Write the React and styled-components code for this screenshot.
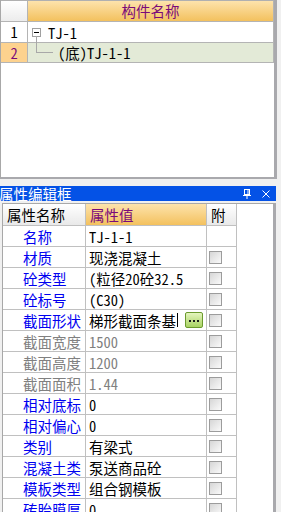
import React from "react";
import styled, { createGlobalStyle } from "styled-components";

const GlobalStyle = createGlobalStyle`
  html, body {
    margin: 0;
    padding: 0;
    background: #f0f0f0;
  }
  body {
    font-family: "Noto Sans Mono CJK SC", "Noto Sans CJK SC", "DejaVu Sans", sans-serif;
    font-size: 14px;
  }
`;

const props = [
  { name: "名称", value: "TJ-1-1", noCheck: true },
  { name: "材质", value: "现浇混凝土" },
  { name: "砼类型", value: "(粒径20砼32.5" },
  { name: "砼标号", value: "(C30)" },
  { name: "截面形状", value: "梯形截面条基", button: true },
  { name: "截面宽度", value: "1500", disabled: true },
  { name: "截面高度", value: "1200", disabled: true },
  { name: "截面面积", value: "1.44", disabled: true },
  { name: "相对底标", value: "0" },
  { name: "相对偏心", value: "0" },
  { name: "类别", value: "有梁式" },
  { name: "混凝土类", value: "泵送商品砼" },
  { name: "模板类型", value: "组合钢模板" },
  { name: "砖胎膜厚", value: "0" },
];

const App = () => (
  <Frame>
    <GlobalStyle />
    <TopPanel>
      <TreeHeader>
        <NumHead />
        <NameHead>构件名称</NameHead>
      </TreeHeader>
      <TreeRow>
        <RowNum>1</RowNum>
        <TreeCell>
          <Expander>
            <svg width="9" height="9" viewBox="0 0 9 9">
              <rect x="0.5" y="0.5" width="8" height="8" fill="#fff" stroke="#a0a0a0" />
              <line x1="2" y1="4.5" x2="7" y2="4.5" stroke="#000" />
            </svg>
          </Expander>
          <NodeText>TJ-1</NodeText>
        </TreeCell>
      </TreeRow>
      <TreeRow $selected>
        <RowNum $selected>2</RowNum>
        <TreeCell $selected>
          <Branch />
          <NodeText $child>(底)TJ-1-1</NodeText>
        </TreeCell>
      </TreeRow>
    </TopPanel>

    <TitleBar>
      <Title>属性编辑框</Title>
      <TitleIcons>
        <svg width="8" height="10" viewBox="0 0 8 10">
          <rect x="1.5" y="0.5" width="5" height="5" fill="none" stroke="#fff" />
          <line x1="5" y1="1" x2="5" y2="5" stroke="#fff" />
          <line x1="0" y1="6.5" x2="8" y2="6.5" stroke="#fff" />
          <line x1="4" y1="7" x2="4" y2="10" stroke="#fff" />
        </svg>
        <svg width="8" height="8" viewBox="0 0 8 8">
          <path d="M0.5 0.5 L7.5 7.5 M7.5 0.5 L0.5 7.5" stroke="#fff" strokeWidth="1" />
        </svg>
      </TitleIcons>
    </TitleBar>

    <PropPanel>
      <PropGrid>
        <HeadCell>属性名称</HeadCell>
        <HeadCell $accent>属性值</HeadCell>
        <HeadCell>附</HeadCell>
        {props.map((p) => (
          <React.Fragment key={p.name}>
            <NameCell $disabled={p.disabled}>{p.name}</NameCell>
            <ValueCell $disabled={p.disabled}>
              <ValueText>{p.value}</ValueText>
              {p.button && (
                <>
                  <Caret />
                  <DotsButton title="...">
                    <svg width="10" height="3" viewBox="0 0 10 3">
                      <rect x="0" y="0" width="2" height="2" fill="#1a1a1a" />
                      <rect x="4" y="0" width="2" height="2" fill="#1a1a1a" />
                      <rect x="8" y="0" width="2" height="2" fill="#1a1a1a" />
                    </svg>
                  </DotsButton>
                </>
              )}
            </ValueCell>
            <CheckCell>{!p.noCheck && <CheckBox />}</CheckCell>
          </React.Fragment>
        ))}
      </PropGrid>
    </PropPanel>
  </Frame>
);

const Frame = styled.div`
  width: 281px;
  height: 512px;
  overflow: hidden;
  display: flex;
  flex-direction: column;
  background: #f0f0f0;
`;

const TopPanel = styled.div`
  width: 273px;
  height: 177px;
  flex: none;
  background: #fff;
  border-left: 1px solid #a8a8a8;
  border-right: 3px solid #a9a9ad;
  border-bottom: 2px solid #a9a9ad;
`;

const TreeHeader = styled.div`
  display: grid;
  grid-template-columns: 27px 1fr;
  height: 22px;
  border-top: 1px solid #b0b0b0;
  border-bottom: 1px solid #b4b4b4;
  box-sizing: border-box;
`;

const NumHead = styled.div`
  background: linear-gradient(#ffffff, #ececec);
  border-right: 1px solid #b4b4b4;
`;

const NameHead = styled.div`
  background: linear-gradient(#fde3ac, #f3c15e);
  color: #7a0a7a;
  text-align: center;
  line-height: 20px;
  font-size: 14.5px;
  border-right: 1px solid #b4b4b4;
`;

const TreeRow = styled.div`
  display: grid;
  grid-template-columns: 27px 1fr;
  height: ${(p) => (p.$selected ? "19px" : "20px")};
  border-bottom: 1px solid #b4b4b4;
`;

const RowNum = styled.div`
  border-right: 1px solid #b4b4b4;
  background: ${(p) => (p.$selected ? "#fdd28e" : "#fff")};
  color: ${(p) => (p.$selected ? "#7a0a7a" : "#000")};
  line-height: ${(p) => (p.$selected ? "19px" : "20px")};
  text-align: center;
  font-size: 14.5px;
`;

const TreeCell = styled.div`
  position: relative;
  display: flex;
  align-items: center;
  background: ${(p) => (p.$selected ? "#e3ead7" : "#fff")};
  border-right: 1px solid #b4b4b4;
`;

const Expander = styled.span`
  display: flex;
  margin-left: 4px;
  margin-right: 7px;
`;

const Branch = styled.span`
  position: absolute;
  left: 8px;
  top: -7px;
  width: 16px;
  height: 16px;
  border-left: 1px solid #a8a8a8;
  border-bottom: 1px solid #a8a8a8;
`;

const NodeText = styled.span`
  font-size: 14.5px;
  line-height: 19px;
  margin-left: ${(p) => (p.$child ? "30px" : "0")};
`;

const TitleBar = styled.div`
  margin-top: 7px;
  width: 276px;
  height: 15px;
  flex: none;
  background: #0452e6;
  display: flex;
  align-items: center;
  justify-content: space-between;
  color: #fff;
`;

const Title = styled.span`
  font-size: 14.5px;
  line-height: 15px;
  margin-left: -1px;
`;

const TitleIcons = styled.span`
  display: flex;
  align-items: center;
  gap: 11px;
  margin-right: 6px;
`;

const PropPanel = styled.div`
  margin-top: 2px;
  margin-left: 2px;
  width: 270px;
  flex: 1;
  background: #fff;
  border-top: 1px solid #a8a8a8;
  border-left: 1px solid #a8a8a8;
  border-right: 3px solid #a9a9ad;
`;

const PropGrid = styled.div`
  display: grid;
  grid-template-columns: 83px 121px 30px;
  grid-auto-rows: 21px;
  grid-template-rows: 22px;
  width: 234px;
`;

const cell = `
  box-sizing: border-box;
  border-right: 1px solid #c0c0c0;
  border-bottom: 1px solid #c0c0c0;
  white-space: nowrap;
  overflow: hidden;
  display: flex;
  align-items: center;
  font-size: 14.5px;
`;

const HeadCell = styled.div`
  ${cell}
  padding-left: 4px;
  color: ${(p) => (p.$accent ? "#7a0a7a" : "#000")};
  background: ${(p) =>
    p.$accent
      ? "linear-gradient(#fde3ac, #f3c15e)"
      : "linear-gradient(#ffffff, #e9e9e9)"};
`;

const NameCell = styled.div`
  ${cell}
  padding-left: 20px;
  color: ${(p) => (p.$disabled ? "#808080" : "#0000f0")};
`;

const ValueCell = styled.div`
  ${cell}
  padding-left: 3px;
  color: ${(p) => (p.$disabled ? "#808080" : "#000")};
`;

const ValueText = styled.span`
  overflow: hidden;
`;

const Caret = styled.span`
  flex: none;
  width: 1px;
  height: 14px;
  background: #000;
  margin-left: 1px;
`;

const DotsButton = styled.span`
  flex: none;
  box-sizing: border-box;
  width: 18px;
  height: 16px;
  margin-left: 7px;
  border: 1px solid #6b9a2e;
  border-radius: 2px;
  background: linear-gradient(#e4f5bd, #a9d264);
  display: flex;
  align-items: center;
  justify-content: center;
  padding-top: 2px;
`;

const CheckCell = styled.div`
  ${cell}
  padding-left: 2px;
`;

const CheckBox = styled.span`
  box-sizing: border-box;
  width: 13px;
  height: 13px;
  border: 1px solid #9c9c9c;
  background: linear-gradient(135deg, #d6d6d6, #fafafa);
`;

export default App;
